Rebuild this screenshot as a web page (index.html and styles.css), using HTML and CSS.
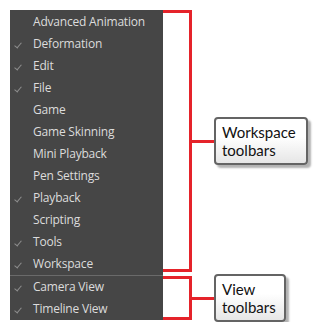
FILE: index.html
```html
<!DOCTYPE html>
<html lang="en">
<head>
    <meta charset="UTF-8">
    <title>Toolbars Menu</title>
    <link rel="stylesheet" href="styles.css">
</head>
<body>
    <div class="page">
        <ul class="menu">
            <li class="item">Advanced Animation</li>
            <li class="item checked">Deformation</li>
            <li class="item checked">Edit</li>
            <li class="item checked">File</li>
            <li class="item">Game</li>
            <li class="item">Game Skinning</li>
            <li class="item">Mini Playback</li>
            <li class="item">Pen Settings</li>
            <li class="item checked">Playback</li>
            <li class="item">Scripting</li>
            <li class="item checked">Tools</li>
            <li class="item checked">Workspace</li>
            <li class="separator"></li>
            <li class="item checked">Camera View</li>
            <li class="item checked">Timeline View</li>
        </ul>

        <div class="callouts">
            <div class="group workspace">
                <div class="bracket"></div>
                <div class="connector"></div>
                <div class="label">Workspace<br>toolbars</div>
            </div>
            <div class="group view">
                <div class="bracket"></div>
                <div class="connector"></div>
                <div class="label">View<br>toolbars</div>
            </div>
        </div>
    </div>
</body>
</html>
```

FILE: styles.css
```css
* {
    margin: 0;
    padding: 0;
    box-sizing: border-box;
}

body {
    background: #ffffff;
    font-family: 'Open Sans', 'Noto Sans', sans-serif;
}

.page {
    display: flex;
    align-items: flex-start;
    padding: 10px 0 0 10px;
}

/* Dark context menu */
.menu {
    list-style: none;
    width: 153px;
    background: #464646;
    padding-top: 1px;
}

.item {
    height: 22px;
    line-height: 22px;
    padding-left: 23px;
    font-size: 12px;
    letter-spacing: -0.2px;
    color: #dcdcdc;
    position: relative;
    white-space: nowrap;
}

.item.checked::before {
    content: '';
    position: absolute;
    left: 6px;
    top: 8px;
    width: 3px;
    height: 6px;
    border-right: 1.5px solid #8e8e8e;
    border-bottom: 1.5px solid #8e8e8e;
    transform: rotate(40deg);
}

.separator {
    height: 1px;
    background: #6a6a6a;
}

/* Red brackets and callout labels */
.callouts {
    display: flex;
    flex-direction: column;
}

.group {
    display: flex;
    align-items: center;
}

.bracket {
    width: 29px;
    border: 3px solid #e5232a;
    border-left: none;
}

.workspace .bracket {
    height: 262px;
}

.view {
    margin-top: 2px;
}

.view .bracket {
    height: 44px;
}

.connector {
    width: 22px;
    height: 3px;
    background: #e5232a;
}

.label {
    font-family: 'Lato', sans-serif;
    font-size: 15px;
    line-height: 18px;
    color: #111111;
    padding: 4px 7px 4px 6px;
    border: 2px solid #646464;
    border-radius: 4px;
    background: linear-gradient(#ffffff 40%, #e6e6e6);
    box-shadow: 3px 3px 2px rgba(0, 0, 0, 0.3);
}

.workspace .label {
    width: 94px;
    height: 48px;
}

.view .label {
    width: 72px;
    height: 48px;
}
```
